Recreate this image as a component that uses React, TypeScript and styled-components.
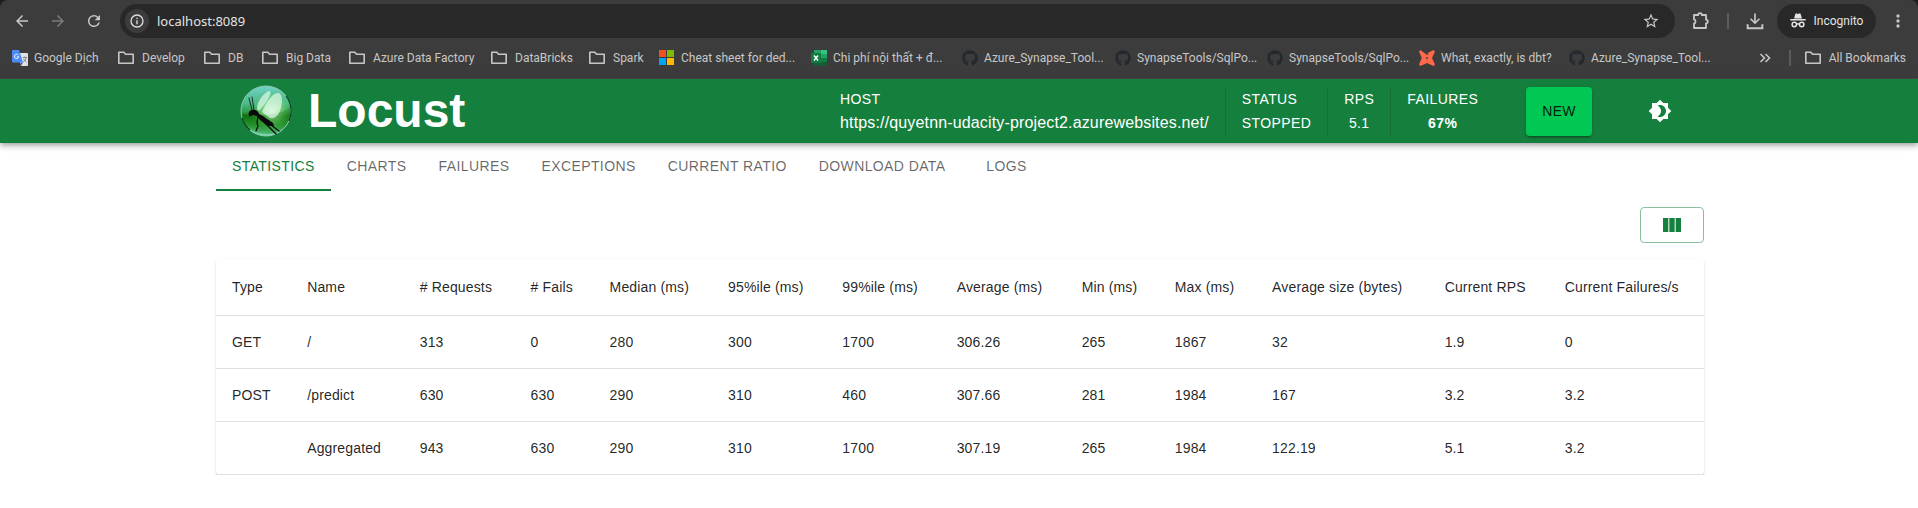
import React from "react";
import styled, { createGlobalStyle, css } from "styled-components";
import { FaGithub } from "react-icons/fa";

const uiFont = 'Roboto, "Noto Sans", sans-serif';
const appFont = '"Liberation Sans", Arial, sans-serif';
const green = "#15803d";

const GlobalStyle = createGlobalStyle`
  *, *::before, *::after { box-sizing: border-box; }
  body { margin: 0; background: #fff; font-family: ${appFont}; color: rgba(0, 0, 0, 0.87); }
  button, input { font: inherit; color: inherit; border: 0; margin: 0; padding: 0; background: none; }
  a { color: inherit; text-decoration: none; }
  svg { display: block; flex: none; }
`;

/* Browser frame */
const Frame = styled.div`
  background: #1f1f1f;
  font-family: ${uiFont};
  color: #c7c7c7;
`;
const FrameInner = styled.div`
  background: #3c3c3c;
  border-radius: 8px 8px 0 0;
  border-bottom: 1px solid #4a4a4a;
`;
const AddressRow = styled.div`
  display: flex;
  align-items: center;
  height: 38px;
  padding: 4px 10px 0 12px;
`;
const NavButtons = styled.div`
  display: flex;
  gap: 16px;
  width: 108px;
`;
const IconButton = styled.button<{ $dim?: boolean }>`
  display: flex;
  align-items: center;
  justify-content: center;
  width: 20px;
  height: 20px;
  color: ${(p) => (p.$dim ? "#7c7c7c" : "#c7c7c7")};
`;
const Omnibox = styled.div`
  flex: 1;
  display: flex;
  align-items: center;
  gap: 8px;
  height: 34px;
  padding: 0 14px 0 5px;
  border-radius: 17px;
  background: #282828;
`;
const InfoButton = styled.button`
  display: flex;
  align-items: center;
  justify-content: center;
  width: 24px;
  height: 24px;
  border-radius: 12px;
  background: #3c3c3c;
  color: #dedede;
`;
const UrlInput = styled.input`
  flex: 1;
  min-width: 0;
  font-family: "Noto Sans", sans-serif;
  font-size: 13px;
  line-height: 20px;
  color: #e3e3e3;
  outline: none;
`;
const Actions = styled.div`
  display: flex;
  align-items: center;
  gap: 16px;
  margin-left: 16px;
`;
const Separator = styled.span`
  width: 2px;
  height: 16px;
  background: #5c5c5c;
`;
const Incognito = styled.button`
  display: flex;
  align-items: center;
  justify-content: center;
  gap: 8px;
  width: 99px;
  height: 34px;
  margin: 0 -4px;
  border-radius: 17px;
  background: #282828;
  color: #e3e3e3;
  font-size: 12px;
`;
const BookmarkBar = styled.nav`
  display: flex;
  align-items: center;
  height: 40px;
  padding: 0 12px;
  font-size: 12px;
  line-height: 16px;
`;
const Bookmark = styled.a<{ $width?: number }>`
  display: flex;
  align-items: center;
  gap: 6px;
  flex: none;
  width: ${(p) => (p.$width ? `${p.$width}px` : "auto")};
  white-space: nowrap;
`;
const BookmarkEnd = styled.div`
  display: flex;
  align-items: center;
  gap: 14px;
  margin-left: auto;
`;

/* Application header */
const Header = styled.header`
  position: relative;
  background: ${green};
  color: #fff;
  box-shadow: 0 2px 4px -1px rgba(0, 0, 0, 0.2), 0 4px 5px rgba(0, 0, 0, 0.14),
    0 1px 10px rgba(0, 0, 0, 0.12);
`;
const Container = styled.div`
  max-width: 1536px;
  margin: 0 auto;
  padding: 0 23px 0 25px;
`;
const Toolbar = styled.div`
  display: flex;
  align-items: center;
  justify-content: space-between;
  height: 64px;
  padding: 0 24px;
`;
const Brand = styled.a`
  display: flex;
  align-items: center;
  gap: 16px;
`;
const Title = styled.h1`
  margin: 0;
  font-size: 48px;
  line-height: 56px;
  font-weight: 700;
`;
const HeaderSide = styled.div`
  display: flex;
  align-items: center;
  gap: 48px;
`;
const Stats = styled.div`
  display: flex;
`;
const buttonText = css`
  font-size: 14px;
  line-height: 24px;
  letter-spacing: 0.02857em;
  text-transform: uppercase;
`;
const Stat = styled.div<{ $start?: boolean }>`
  ${buttonText}
  display: flex;
  flex-direction: column;
  min-height: 49px;
  align-items: ${(p) => (p.$start ? "flex-start" : "center")};
  padding: 0 16px;
  border-left: 1px solid rgba(0, 0, 0, 0.12);
  &:first-child { border-left: 0; }
  &:last-child { padding-right: 0; }
`;
const HostUrl = styled.a`
  font-size: 16px;
  letter-spacing: 0.00938em;
  text-transform: none;
`;
const Strong = styled.strong`
  font-weight: 700;
`;
const NewButton = styled.button`
  ${buttonText}
  height: 49px;
  padding: 0 16px;
  border-radius: 4px;
  background: #00c853;
  color: rgba(0, 0, 0, 0.87);
  box-shadow: 0 3px 1px -2px rgba(0, 0, 0, 0.2), 0 2px 2px rgba(0, 0, 0, 0.14),
    0 1px 5px rgba(0, 0, 0, 0.12);
`;
const ThemeButton = styled.button`
  padding: 8px;
  border-radius: 20px;
`;

/* Page content */
const Tabs = styled.div`
  display: flex;
`;
const Tab = styled.button<{ $active?: boolean }>`
  ${buttonText}
  min-width: 90px;
  height: 48px;
  padding: 0 16px;
  border-bottom: 2px solid ${(p) => (p.$active ? green : "transparent")};
  color: ${(p) => (p.$active ? green : "rgba(0, 0, 0, 0.6)")};
`;
const TableTools = styled.div`
  display: flex;
  justify-content: flex-end;
  padding: 16px 0;
`;
const ColumnsButton = styled.button`
  display: flex;
  align-items: center;
  justify-content: center;
  width: 64px;
  height: 36px;
  border: 1px solid rgba(21, 128, 61, 0.5);
  border-radius: 4px;
  color: ${green};
`;
const Paper = styled.div`
  overflow: hidden;
  border-radius: 4px;
  box-shadow: 0 2px 1px -1px rgba(0, 0, 0, 0.2), 0 1px 1px rgba(0, 0, 0, 0.14),
    0 1px 3px rgba(0, 0, 0, 0.12);
`;
const Table = styled.table`
  width: 100%;
  border-collapse: collapse;
  font-size: 14px;
  letter-spacing: 0.01071em;
  text-align: left;
`;
const cell = css`
  padding: 16px;
  border-bottom: 1px solid #e0e0e0;
`;
const HeadCell = styled.th`
  ${cell}
  font-weight: 400;
  line-height: 24px;
`;
const Cell = styled.td`
  ${cell}
  line-height: 20px;
`;

const Mat = ({ d, size = 24 }: { d: string; size?: number }) => (
  <svg width={size} height={size} viewBox="0 0 24 24" fill="currentColor" aria-hidden="true">
    <path d={d} />
  </svg>
);

const icons = {
  back: "M20 11H7.83l5.59-5.59L12 4l-8 8 8 8 1.41-1.41L7.83 13H20v-2z",
  forward: "M12 4l-1.41 1.41L16.17 11H4v2h12.17l-5.58 5.59L12 20l8-8z",
  reload:
    "M17.65 6.35A7.96 7.96 0 0 0 12 4a8 8 0 1 0 7.73 10h-2.08A6 6 0 1 1 12 6c1.66 0 3.14.69 4.22 1.78L13 11h7V4l-2.35 2.35z",
  info: "M11 7h2v2h-2V7zm0 4h2v6h-2v-6zm1-9a10 10 0 1 0 0 20 10 10 0 0 0 0-20zm0 18a8 8 0 1 1 0-16 8 8 0 0 1 0 16z",
  star: "M22 9.24l-7.19-.62L12 2 9.19 8.63 2 9.24l5.46 4.73L5.82 21 12 17.27 18.18 21l-1.63-7.03L22 9.24zM12 15.4l-3.76 2.27 1-4.28-3.32-2.88 4.38-.38L12 6.1l1.71 4.04 4.38.38-3.32 2.88 1 4.28L12 15.4z",
  download: "M11 3h2v9.2l3.6-3.6L18 10l-6 6-6-6 1.4-1.4 3.6 3.6V3zM2 16h2.4v3.6h15.2V16H22v6H2v-6z",
  more: "M12 8a2 2 0 1 0 0-4 2 2 0 0 0 0 4zm0 2a2 2 0 1 0 0 4 2 2 0 0 0 0-4zm0 6a2 2 0 1 0 0 4 2 2 0 0 0 0-4z",
  theme:
    "M20 8.69V4h-4.69L12 .69 8.69 4H4v4.69L.69 12 4 15.31V20h4.69L12 23.31 15.31 20H20v-4.69L23.31 12 20 8.69zM12 18c-.89 0-1.74-.2-2.5-.55C11.56 16.5 13 14.42 13 12s-1.44-4.5-3.5-5.45C10.26 6.2 11.11 6 12 6c3.31 0 6 2.69 6 6s-2.69 6-6 6z",
  columns: "M14.67 5v14H9.33V5h5.34zm1 14H21V5h-5.33v14zm-7.34 0V5H3v14h5.33z",
};

const FolderIcon = () => (
  <svg width="18" height="16" viewBox="0 0 18 16" fill="none" stroke="#c7c7c7" strokeWidth="1.6" strokeLinejoin="round">
    <path d="M.8 13.200V2.200h5l1.800 2h7.600v9z" />
  </svg>
);
const TranslateIcon = () => (
  <svg width="16" height="16" viewBox="0 0 16 16">
    <path d="M6 3h9a1 1 0 0 1 1 1v11a1 1 0 0 1-1 1H9z" fill="#dfe1e3" />
    <path d="M8.5 12.5H11L9 16z" fill="#3257c8" />
    <path d="M1 0h6l4 12.5H1a1 1 0 0 1-1-1V1a1 1 0 0 1 1-1z" fill="#4c8bf5" />
    <path d="M6.4 5.1A2.2 2.2 0 1 0 6.8 6.8H4.8" fill="none" stroke="#fff" strokeWidth="1" />
    <path d="M10.5 7.5H15M12.7 6.5v1M14.2 7.6c-.3 2-1.6 3.5-3 4.4M11.6 9c.6 1.400 1.600 2.400 3 3.200" fill="none" stroke="#6d7680" strokeWidth=".8" />
  </svg>
);
const MicrosoftIcon = () => (
  <svg width="16" height="16" viewBox="0 0 16 16">
    <path d="M0 0h7v7H0z" fill="#f25022" />
    <path d="M8 0h7v7H8z" fill="#7fba00" />
    <path d="M0 8h7v7H0z" fill="#00a4ef" />
    <path d="M8 8h7v7H8z" fill="#ffb900" />
  </svg>
);
const ExcelIcon = () => (
  <svg width="16" height="16" viewBox="0 0 16 16">
    <path d="M3 0h6.500v4H3z" fill="#21a366" />
    <path d="M9.500 0H16v4H9.500z" fill="#33c481" />
    <path d="M3 4h6.500v4H3z" fill="#107c41" />
    <path d="M9.500 4H16v4H9.500z" fill="#21a366" />
    <path d="M3 8h13v8H3z" fill="#185c37" />
    <path d="M9.500 8H16v4H9.500z" fill="#107c41" />
    <path d="M0 3h10v10H0z" fill="#107c41" />
    <path d="M3 5.500l4 5M7 5.500l-4 5" stroke="#fff" strokeWidth="1.500" />
  </svg>
);
const DbtIcon = () => (
  <svg width="16" height="16" viewBox="0 0 16 16">
    <path
      d="M1.500.2C.5.2 0 1 .2 2l2.600 6L.2 14c-.2 1.200.8 2 1.800 1.800L8 13l6 2.800c1.200.2 2-.8 1.800-1.800L13 8l2.800-6C16 .8 15 0 14 .2L8.600 3 10 4.500 8 4.800 7 4z"
      fill="#ff694a"
    />
    <path d="M8 6.800L9.200 8 8 9.200 6.800 8z" fill="#3c3c3c" />
  </svg>
);
const GithubIcon = () => <FaGithub size={16} color="#24292f" />;

const IncognitoIcon = () => (
  <svg width="16" height="16" viewBox="0 0 16 16" fill="currentColor">
    <path d="M5.300 1.200c.2-.7.7-1 1.300-.8L8 .9l1.400-.5c.6-.2 1.100.1 1.300.8L12 5.500H4z" />
    <path d="M.3 6h15.400v1.500H.3z" />
    <g fill="none" stroke="currentColor" strokeWidth="1.500">
      <circle cx="4.300" cy="11.500" r="2.200" />
      <circle cx="11.700" cy="11.500" r="2.200" />
      <path d="M6.500 11.300c1-.7 2-.7 3 0" />
    </g>
  </svg>
);
const PuzzleIcon = () => (
  <svg width="20" height="20" viewBox="0 0 20 20" fill="none" stroke="currentColor" strokeWidth="1.800" strokeLinejoin="round">
    <path d="M3 4h4.200a1.800 1.800 0 0 1 3.600 0H15v4.700a1.800 1.800 0 0 1 0 3.600V17H3v-4.400a2.200 2.200 0 0 0 0-4.200z" />
  </svg>
);
const ChevronsIcon = () => (
  <svg width="12" height="10" viewBox="0 0 12 10" fill="none" stroke="currentColor" strokeWidth="1.600">
    <path d="M1.500 1l4 4-4 4M6.500 1l4 4-4 4" />
  </svg>
);

const LocustLogo = () => (
  <svg width="52" height="52" viewBox="0 0 52 52" role="img" aria-label="Locust">
    <defs>
      <linearGradient id="orb" x1="0" y1="0" x2="0" y2="1">
        <stop offset="0" stopColor="#6fd3c4" />
        <stop offset=".35" stopColor="#4cb98a" />
        <stop offset=".52" stopColor="#2f9a45" />
        <stop offset=".6" stopColor="#147010" />
        <stop offset=".78" stopColor="#2f9a35" />
        <stop offset="1" stopColor="#7fe0c0" />
      </linearGradient>
      <radialGradient id="glow" cx=".62" cy=".5" r=".45">
        <stop offset="0" stopColor="#e8ffe8" stopOpacity=".9" />
        <stop offset=".5" stopColor="#8fe08a" stopOpacity=".55" />
        <stop offset="1" stopColor="#3fae3f" stopOpacity="0" />
      </radialGradient>
    </defs>
    <circle cx="26" cy="26" r="25" fill="url(#orb)" />
    <circle cx="26" cy="26" r="24" fill="url(#glow)" />
    <path d="M2 29c14 3 36 1 48-6a24 24 0 0 1-14 25C22 52 5 45 2 29z" fill="#0b7a10" opacity=".3" />
    <circle cx="26" cy="26" r="25" fill="none" stroke="#8fc9b0" strokeWidth="1" />
    <path d="M46 11a25 25 0 0 1 3 25M2 33a25 25 0 0 0 8 12" fill="none" stroke="#073d1c" strokeWidth="1.200" />
    <path d="M17 24C17 17 23 8 29 6c3 0 1 5-1 8-2 4-6 8-9 12z" fill="#d6f7e8" opacity=".75" />
    <path d="M22 27c3-8 10-19 16-19 6 1 4 14 1 20-2 4-6 6-9 5z" fill="#e2fbe8" opacity=".7" />
    <g fill="none" stroke="#0a0a0a" strokeLinecap="round">
      <path d="M12 25L9 13M14 25l-2-13" strokeWidth=".8" />
      <path d="M18 31l-1 7 1 3-2 5" strokeWidth="1.200" />
      <path d="M24 37l12 12M27 37l12 9" strokeWidth="1.300" />
    </g>
    <path d="M9 27c2-3 7-3 9 0l1 2c5 2 9 6 14 9l1 3h-4c-3 0-4-1-6-3-3-2-5-4-7-7l-4-1-2 1c-2 1-3-1-2-4z" fill="#0a0a0a" />
  </svg>
);

const bookmarks = [
  { label: "Google Dịch", icon: TranslateIcon, width: 106 },
  { label: "Develop", icon: FolderIcon, width: 86 },
  { label: "DB", icon: FolderIcon, width: 58 },
  { label: "Big Data", icon: FolderIcon, width: 87 },
  { label: "Azure Data Factory", icon: FolderIcon, width: 142 },
  { label: "DataBricks", icon: FolderIcon, width: 98 },
  { label: "Spark", icon: FolderIcon, width: 70 },
  { label: "Cheat sheet for ded...", icon: MicrosoftIcon, width: 152 },
  { label: "Chi phí nội thất + đ...", icon: ExcelIcon, width: 151 },
  { label: "Azure_Synapse_Tool...", icon: GithubIcon, width: 153 },
  { label: "SynapseTools/SqlPo...", icon: GithubIcon, width: 152 },
  { label: "SynapseTools/SqlPo...", icon: GithubIcon, width: 152 },
  { label: "What, exactly, is dbt?", icon: DbtIcon, width: 150 },
  { label: "Azure_Synapse_Tool...", icon: GithubIcon, width: 152 },
];

const tabs = ["Statistics", "Charts", "Failures", "Exceptions", "Current Ratio", "Download Data", "Logs"];

const columns = [
  "Type", "Name", "# Requests", "# Fails", "Median (ms)", "95%ile (ms)", "99%ile (ms)",
  "Average (ms)", "Min (ms)", "Max (ms)", "Average size (bytes)", "Current RPS", "Current Failures/s",
];

const rows = [
  ["GET", "/", "313", "0", "280", "300", "1700", "306.26", "265", "1867", "32", "1.9", "0"],
  ["POST", "/predict", "630", "630", "290", "310", "460", "307.66", "281", "1984", "167", "3.2", "3.2"],
  ["", "Aggregated", "943", "630", "290", "310", "1700", "307.19", "265", "1984", "122.19", "5.1", "3.2"],
];

export default function App() {
  return (
    <>
      <GlobalStyle />
      <Frame>
        <FrameInner>
          <AddressRow>
            <NavButtons>
              <IconButton aria-label="Back"><Mat d={icons.back} size={18} /></IconButton>
              <IconButton aria-label="Forward" $dim><Mat d={icons.forward} size={18} /></IconButton>
              <IconButton aria-label="Reload"><Mat d={icons.reload} size={18} /></IconButton>
            </NavButtons>
            <Omnibox>
              <InfoButton aria-label="Site information"><Mat d={icons.info} size={16} /></InfoButton>
              <UrlInput aria-label="Address" defaultValue="localhost:8089" />
              <IconButton aria-label="Bookmark this tab"><Mat d={icons.star} size={18} /></IconButton>
            </Omnibox>
            <Actions>
              <IconButton aria-label="Extensions"><PuzzleIcon /></IconButton>
              <Separator />
              <IconButton aria-label="Downloads"><Mat d={icons.download} size={20} /></IconButton>
              <Incognito><IncognitoIcon />Incognito</Incognito>
              <IconButton aria-label="Menu"><Mat d={icons.more} size={20} /></IconButton>
            </Actions>
          </AddressRow>
          <BookmarkBar aria-label="Bookmarks">
            {bookmarks.map(({ label, icon: Icon, width }, i) => (
              <Bookmark key={i} href="#" $width={width}><Icon />{label}</Bookmark>
            ))}
            <BookmarkEnd>
              <IconButton aria-label="More bookmarks"><ChevronsIcon /></IconButton>
              <Separator />
              <Bookmark href="#"><FolderIcon />All Bookmarks</Bookmark>
            </BookmarkEnd>
          </BookmarkBar>
        </FrameInner>
      </Frame>

      <Header>
        <Container>
          <Toolbar>
            <Brand href="#"><LocustLogo /><Title>Locust</Title></Brand>
            <HeaderSide>
              <Stats>
                <Stat $start>
                  <span>Host</span>
                  <HostUrl href="#">https://quyetnn-udacity-project2.azurewebsites.net/</HostUrl>
                </Stat>
                <Stat $start><span>Status</span><span>Stopped</span></Stat>
                <Stat><span>RPS</span><span>5.1</span></Stat>
                <Stat><span>Failures</span><Strong>67%</Strong></Stat>
              </Stats>
              <NewButton>New</NewButton>
              <ThemeButton aria-label="Toggle theme"><Mat d={icons.theme} /></ThemeButton>
            </HeaderSide>
          </Toolbar>
        </Container>
      </Header>

      <Container as="main">
        <Tabs role="tablist">
          {tabs.map((t, i) => (
            <Tab key={t} role="tab" aria-selected={i === 0} $active={i === 0}>{t}</Tab>
          ))}
        </Tabs>
        <TableTools>
          <ColumnsButton aria-label="Select columns"><Mat d={icons.columns} /></ColumnsButton>
        </TableTools>
        <Paper>
          <Table>
            <thead>
              <tr>{columns.map((c) => <HeadCell key={c} scope="col">{c}</HeadCell>)}</tr>
            </thead>
            <tbody>
              {rows.map((r, i) => (
                <tr key={i}>{r.map((v, j) => <Cell key={j}>{v}</Cell>)}</tr>
              ))}
            </tbody>
          </Table>
        </Paper>
      </Container>
    </>
  );
}
